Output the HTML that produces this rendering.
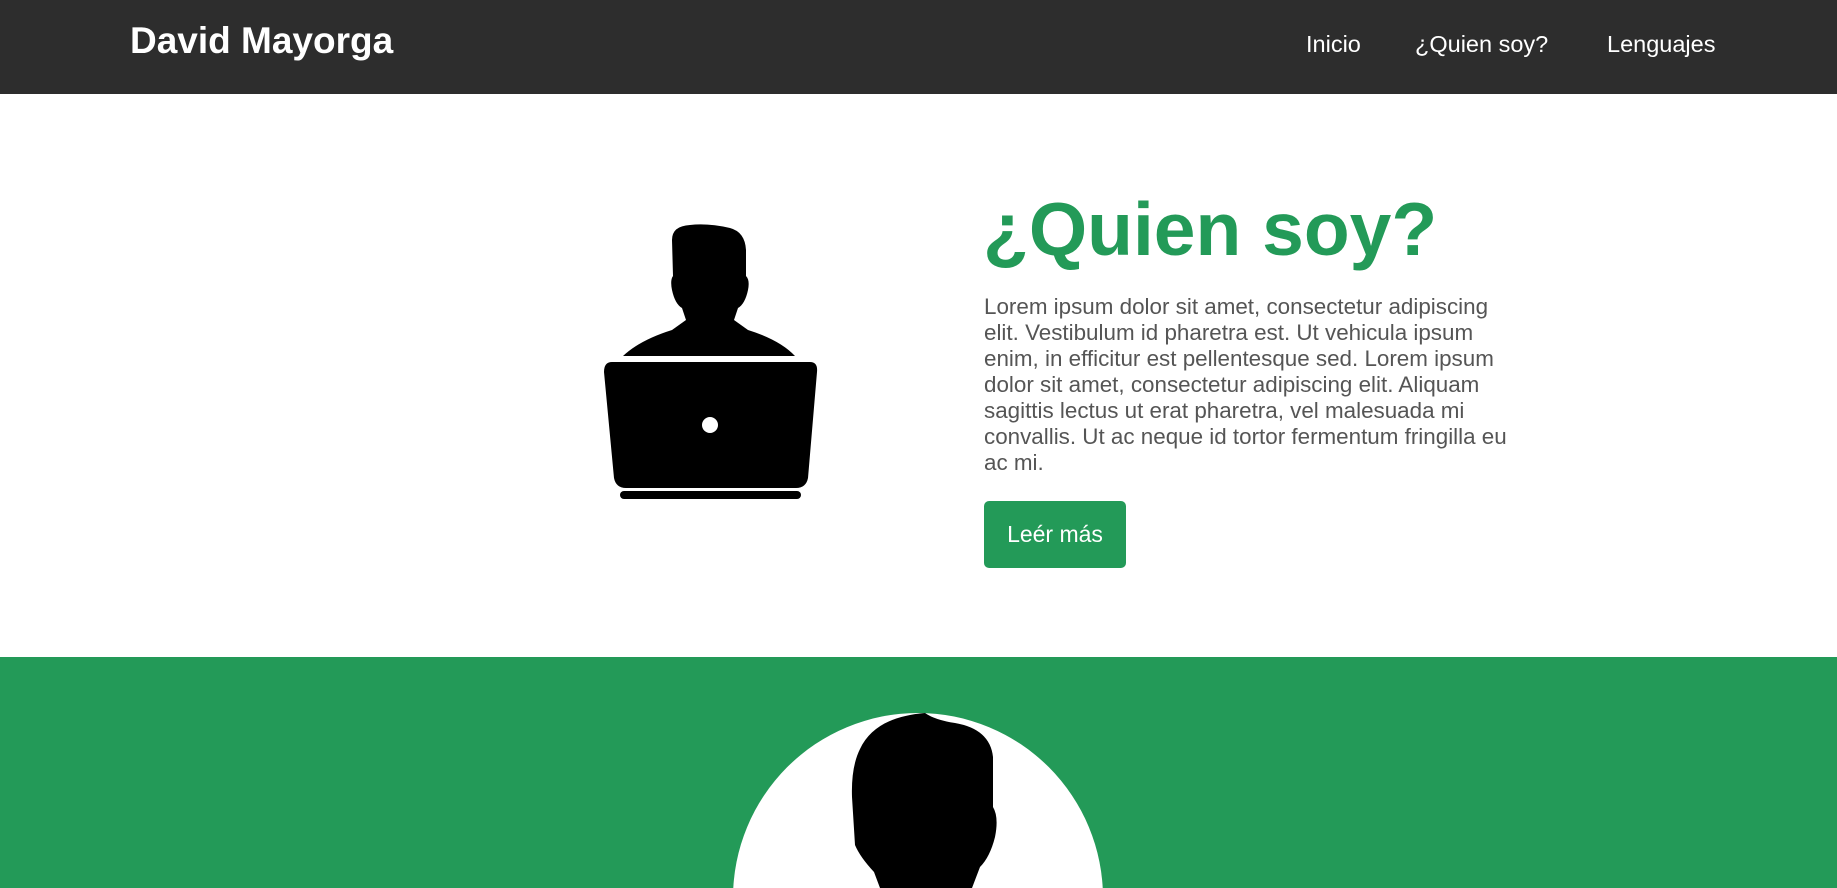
<!DOCTYPE html>
<html><head><meta charset="utf-8"><style>
*{margin:0;padding:0;box-sizing:border-box}
body{width:1837px;height:888px;overflow:hidden;font-family:"Liberation Sans",Arial,sans-serif;background:#fff;position:relative}
.nav{position:absolute;left:0;top:0;width:1837px;height:94px;background:#2d2d2d}
.brand{position:absolute;left:130px;top:20px;color:#fff;font-weight:bold;font-size:37px}
.nav a{position:absolute;top:31px;color:#fff;font-size:23.5px;text-decoration:none}
h1{position:absolute;left:983px;top:184px;font-size:75px;color:#239a58;font-weight:bold;line-height:90px}
p{position:absolute;left:984px;top:294px;width:530px;font-size:22.4px;line-height:26px;color:#555}
.btn{position:absolute;left:984px;top:501px;width:142px;height:67px;background:#239a58;border-radius:5px;color:#fff;font-size:23px;line-height:67px;text-align:center}
.green{position:absolute;left:0;top:657px;width:1837px;height:231px;background:#239a58;overflow:hidden}
</style></head><body>
<div class="nav"><div class="brand">David Mayorga</div>
<a style="left:1306px">Inicio</a><a style="left:1415px">¿Quien soy?</a><a style="left:1607px">Lenguajes</a></div>
<svg style="position:absolute;left:0;top:0" width="1837" height="888">
<path d="M672 240 Q672 226 690 225 Q708 223 730 228 Q745 232 746 250 L746 276 Q750 280 748 290 Q745 304 738 308 L734 320 L748 330 Q780 340 795 356 L623 356 Q640 340 672 330 L686 320 L682 308 Q675 304 672 290 Q670 280 673 276 Z" fill="#000"/>
<path d="M612 362 L810 362 Q818 362 817 372 L808 478 Q806 488 796 488 L626 488 Q616 488 614 478 L604 372 Q604 362 612 362 Z" fill="#000"/>
<circle cx="710" cy="425" r="8" fill="#fff"/>
<rect x="620" y="491" width="181" height="8" rx="4" fill="#000"/>
</svg>
<h1>¿Quien soy?</h1>
<p>Lorem ipsum dolor sit amet, consectetur adipiscing elit. Vestibulum id pharetra est. Ut vehicula ipsum enim, in efficitur est pellentesque sed. Lorem ipsum dolor sit amet, consectetur adipiscing elit. Aliquam sagittis lectus ut erat pharetra, vel malesuada mi convallis. Ut ac neque id tortor fermentum fringilla eu ac mi.</p>
<div class="btn">Leér más</div>
<div class="green">
<svg width="1837" height="231" style="position:absolute;left:0;top:0">
<circle cx="918" cy="241" r="185" fill="#fff"/>
<path d="M925 56 Q935 63 955 66 Q990 72 993 100 L993 150 Q999 160 995 180 Q990 200 980 210 L972 231 L880 231 L874 215 Q860 200 855 188 L852 140 Q851 110 860 92 Q875 60 925 56 Z" fill="#000"/>
</svg>
</div>
</body></html>
